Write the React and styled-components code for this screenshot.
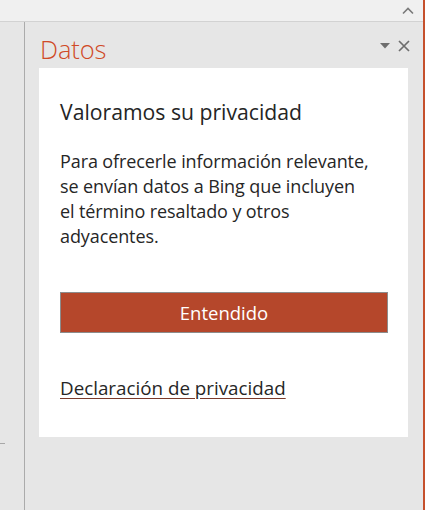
import React from "react";
import styled, { createGlobalStyle } from "styled-components";

const Global = createGlobalStyle`
  html, body { margin: 0; padding: 0; background: #e6e6e6; }
  #root { height: 510px; }
`;

const Window = styled.div`
  height: 510px;
  width: 425px;
  box-sizing: border-box;
  border-right: 2px solid #c5502c;
  display: flex;
  flex-direction: column;
  background: #e6e6e6;
  font-family: "Open Sans", "Noto Sans", sans-serif;
  color: #252525;
`;

const TopBar = styled.div`
  height: 21px;
  flex: none;
  background: #f0f0f0;
  border-bottom: 1px solid #d2d2d2;
  display: flex;
  justify-content: flex-end;
  align-items: center;
  padding-right: 9px;
`;

const Body = styled.div`
  flex: 1;
  display: flex;
`;

const Gutter = styled.div`
  width: 24px;
  flex: none;
  border-right: 1px solid #ababab;
  position: relative;
`;

const Tick = styled.div`
  position: absolute;
  left: 0;
  top: 421px;
  width: 5px;
  height: 1px;
  background: #a8a8a8;
`;

const Pane = styled.div`
  flex: 1;
  display: flex;
  flex-direction: column;
  padding: 0 15px 0 14px;
`;

const PaneHeader = styled.div`
  display: flex;
  align-items: center;
  justify-content: space-between;
  height: 46px;
  padding-left: 1px;
`;

const Title = styled.h1`
  margin: 0;
  margin-top: 8px;
  font-weight: 300;
  font-size: 25.5px;
  line-height: 30px;
  color: #d04a27;
  letter-spacing: -0.1px;
`;

const HeaderTools = styled.div`
  display: flex;
  align-items: center;
  gap: 8px;
  margin-right: -2px;
  margin-top: 2px;
`;

const Card = styled.div`
  background: #ffffff;
  height: 369px;
  box-sizing: border-box;
  padding: 29px 20px 0 21px;
`;

const Heading = styled.h2`
  margin: 0;
  font-weight: 400;
  font-size: 21.2px;
  line-height: 30px;
  color: #252525;
`;

const Text = styled.p`
  margin: 22px 0 0;
  font-size: 18px;
  line-height: 25px;
  color: #262626;
  letter-spacing: -0.1px;
`;

const Button = styled.button`
  display: block;
  width: 100%;
  height: 41px;
  margin-top: 43px;
  background: #b5472b;
  border: 1px solid #8c8c8c;
  color: #ffffff;
  font-family: inherit;
  font-size: 18.5px;
  cursor: pointer;
`;

const Link = styled.a`
  display: inline-block;
  margin-top: 42px;
  font-size: 18.8px;
  color: #262626;
  text-decoration: underline;
  text-decoration-color: #7a3a2a;
  text-underline-offset: 3px;
`;

const Chevron = () => (
  <svg width="12" height="8" viewBox="0 0 12 8">
    <path d="M1 6.5 L6 1.5 L11 6.5" fill="none" stroke="#7a7a7a" strokeWidth="1.6" />
  </svg>
);

const Caret = () => (
  <svg width="10" height="6" viewBox="0 0 10 6">
    <path d="M0 0 H10 L5 5.5 Z" fill="#6e6e6e" />
  </svg>
);

const Close = () => (
  <svg width="12" height="12" viewBox="0 0 12 12">
    <path d="M1 1 L11 11 M11 1 L1 11" stroke="#6e6e6e" strokeWidth="1.7" />
  </svg>
);

export default function App() {
  return (
    <>
      <Global />
      <Window>
        <TopBar>
          <Chevron />
        </TopBar>
        <Body>
          <Gutter>
            <Tick />
          </Gutter>
          <Pane>
            <PaneHeader>
              <Title>Datos</Title>
              <HeaderTools>
                <Caret />
                <Close />
              </HeaderTools>
            </PaneHeader>
            <Card>
              <Heading>Valoramos su privacidad</Heading>
              <Text>
                Para ofrecerle información relevante,
                <br />
                se envían datos a Bing que incluyen
                <br />
                el término resaltado y otros
                <br />
                adyacentes.
              </Text>
              <Button>Entendido</Button>
              <Link href="#">Declaración de privacidad</Link>
            </Card>
          </Pane>
        </Body>
      </Window>
    </>
  );
}
